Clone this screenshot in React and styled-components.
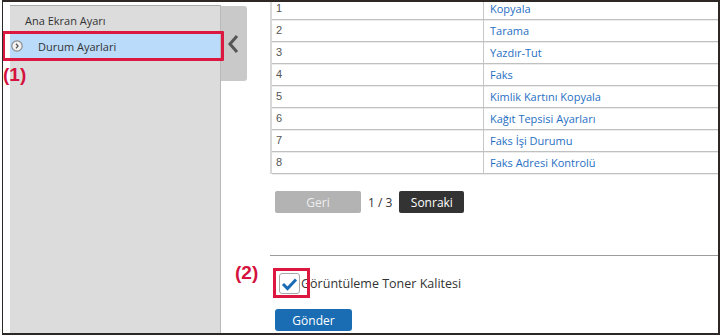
import React from "react";
import styled, { createGlobalStyle } from "styled-components";

const GlobalStyle = createGlobalStyle`
  html, body {
    margin: 0;
    padding: 0;
    background: #fff;
  }
  body {
    font-family: "Open Sans", "Noto Sans", sans-serif;
  }
`;

const Frame = styled.div`
  display: flex;
  width: 718px;
  height: 335px;
  margin-left: 2px;
  box-sizing: border-box;
  border: 2px solid #2d2725;
  border-left-width: 1px;
  overflow: hidden;
  background: #fff;
`;

const SideArea = styled.div`
  display: flex;
  align-items: flex-start;
  padding-left: 7px;
`;

const SidePanel = styled.nav`
  position: relative;
  align-self: stretch;
  width: 211px;
  margin-top: 3px;
  box-sizing: border-box;
  background: #dcdcdc;
  border-top: 1px solid #a9a9a9;
  border-right: 1px solid #b9b9b9;
`;

const MenuItem = styled.div`
  position: relative;
  display: flex;
  align-items: center;
  gap: 15px;
  height: ${(p) => (p.$active ? "24px" : "28px")};
  padding-left: ${(p) => (p.$active ? "1px" : "15px")};
  background: ${(p) => (p.$active ? "#badbf9" : "transparent")};
  font-size: 11px;
  color: #333;

  ${(p) =>
    p.$active &&
    `
    &::after {
      content: "";
      position: absolute;
      top: -3px;
      bottom: -3px;
      left: -8px;
      right: -4px;
      border: 3px solid #dc1840;
      border-radius: 1px;
    }
  `}
`;

const Marker = styled.span`
  position: absolute;
  font-family: "Liberation Sans", Arial, sans-serif;
  font-weight: 700;
  font-size: 19px;
  line-height: 1;
  color: #d4123d;
  left: ${(p) => p.$left}px;
  top: ${(p) => p.$top}px;
`;

const CollapseTab = styled.button`
  display: flex;
  align-items: center;
  justify-content: center;
  width: 26px;
  height: 75px;
  margin-top: 4px;
  padding: 0 2px 0 0;
  border: none;
  border-radius: 0 3px 3px 0;
  background: #c9c9c9;
`;

const Main = styled.main`
  flex: 1;
  min-width: 0;
  display: flex;
  flex-direction: column;
  padding-left: 23px;
`;

const Table = styled.div`
  margin-top: -4px;
  border-left: 2px solid #d8d8d8;
`;

const Row = styled.div`
  display: grid;
  grid-template-columns: 212px 1fr;
  height: 21px;
  border-bottom: 1px solid #c0c0c0;
  box-shadow: 0 1px 0 #ececec;
`;

const NumCell = styled.div`
  padding-left: 4px;
  border-right: 1px solid #c8c8c8;
  font-family: "Liberation Sans", Arial, sans-serif;
  font-size: 11px;
  line-height: 21px;
  color: #555;
`;

const LinkCell = styled.a`
  padding-left: 6px;
  font-size: 11px;
  line-height: 21px;
  color: #1f6fc3;
  text-decoration: none;
`;

const Pager = styled.div`
  display: flex;
  align-items: center;
  gap: 7px;
  margin: 17px 0 0 5px;
`;

const PagerButton = styled.button`
  width: ${(p) => p.$width}px;
  height: 22px;
  border: none;
  border-radius: 2px;
  font-family: "Open Sans", sans-serif;
  font-size: 12px;
  background: ${(p) => (p.$dark ? "#333333" : "#b3b3b3")};
  color: ${(p) => (p.$dark ? "#ffffff" : "#eeeeee")};
`;

const PageCount = styled.span`
  font-size: 12px;
  color: #333;
`;

const Divider = styled.hr`
  width: 100%;
  height: 1px;
  margin: 42px 0 0;
  border: none;
  background: #9c9c9c;
`;

const OptionRow = styled.label`
  position: relative;
  display: flex;
  align-items: center;
  gap: 1px;
  margin: 17px 0 0 9px;
  font-size: 12.5px;
  color: #333;
`;

const CheckBox = styled.span`
  position: relative;
  display: flex;
  align-items: center;
  justify-content: center;
  width: 21px;
  height: 21px;
  box-sizing: border-box;
  border: 1px solid #a8a8a8;
  border-radius: 3px;
  background: #fff;

  &::after {
    content: "";
    position: absolute;
    z-index: 2;
    top: -6px;
    bottom: -5px;
    left: -7px;
    right: -11px;
    border: 3px solid #dc1840;
  }
`;

const SubmitButton = styled.button`
  width: 77px;
  height: 22px;
  margin: 15px 0 0 5px;
  border: none;
  border-radius: 3px;
  background: #1a6db3;
  color: #fff;
  font-family: "Open Sans", sans-serif;
  font-size: 12px;
`;

const rows = [
  "Kopyala",
  "Tarama",
  "Yazdır-Tut",
  "Faks",
  "Kimlik Kartını Kopyala",
  "Kağıt Tepsisi Ayarları",
  "Faks İşi Durumu",
  "Faks Adresi Kontrolü",
];

const App = () => {
  return (
    <>
      <GlobalStyle />
      <Frame>
        <SideArea>
          <SidePanel>
            <MenuItem>Ana Ekran Ayarı</MenuItem>
            <MenuItem $active>
              <svg width="12" height="12" viewBox="0 0 12 12">
                <circle cx="6" cy="6" r="5.2" fill="#f4f4f4" stroke="#8a8a8a" strokeWidth="1.2" />
                <polyline points="5,3.6 7,6 5,8.4" fill="none" stroke="#555" strokeWidth="1.3" />
              </svg>
              Durum Ayarlari
              <Marker $left={-7} $top={31}>(1)</Marker>
            </MenuItem>
          </SidePanel>
          <CollapseTab aria-label="collapse">
            <svg width="12" height="20" viewBox="0 0 12 20">
              <polyline points="10,2 3,10 10,18" fill="none" stroke="#555" strokeWidth="3" />
            </svg>
          </CollapseTab>
        </SideArea>

        <Main>
          <Table>
            {rows.map((name, i) => (
              <Row key={name}>
                <NumCell>{i + 1}</NumCell>
                <LinkCell href="#">{name}</LinkCell>
              </Row>
            ))}
          </Table>

          <Pager>
            <PagerButton $width={86}>Geri</PagerButton>
            <PageCount>1 / 3</PageCount>
            <PagerButton $width={65} $dark>Sonraki</PagerButton>
          </Pager>

          <Divider />

          <OptionRow>
            <Marker $left={-44} $top={-10}>(2)</Marker>
            <CheckBox>
              <svg width="17" height="14" viewBox="0 0 17 14">
                <polyline points="2,7 6.5,11.5 15,2.5" fill="none" stroke="#1a6bb5" strokeWidth="3" />
              </svg>
            </CheckBox>
            Görüntüleme Toner Kalitesi
          </OptionRow>

          <div>
            <SubmitButton>Gönder</SubmitButton>
          </div>
        </Main>
      </Frame>
    </>
  );
};

export default App;
